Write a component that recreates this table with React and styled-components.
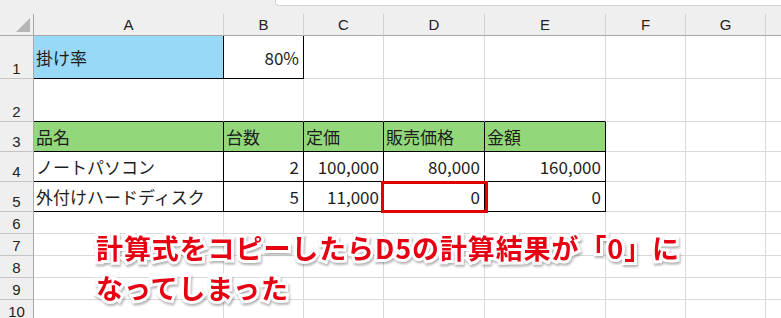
import React from "react";
import styled, { createGlobalStyle } from "styled-components";

const GlobalStyle = createGlobalStyle`
  html, body {
    margin: 0;
    padding: 0;
    background: #fff;
    overflow: hidden;
  }
`;

const COLS = ["A", "B", "C", "D", "E", "F", "G", ""];
const WIDTHS = [34, 190, 80, 80, 101, 121, 80, 80, 16];
const HEIGHTS = [43, 43, 30, 30, 30, 22, 22, 22, 22, 22];

const BLUE = "#97d9f6";
const GREEN = "#92d87a";

// sparse cell data, keyed by [row][col]
const DATA = {
  1: {
    0: { text: "掛け率", fill: BLUE, box: true },
    1: { text: "80%", right: true, box: true },
  },
  3: {
    0: { text: "品名", fill: GREEN, box: true },
    1: { text: "台数", fill: GREEN, box: true },
    2: { text: "定価", fill: GREEN, box: true },
    3: { text: "販売価格", fill: GREEN, box: true },
    4: { text: "金額", fill: GREEN, box: true },
  },
  4: {
    0: { text: "ノートパソコン", box: true },
    1: { text: "2", right: true, box: true },
    2: { text: "100,000", right: true, box: true },
    3: { text: "80,000", right: true, box: true },
    4: { text: "160,000", right: true, box: true },
  },
  5: {
    0: { text: "外付けハードディスク", box: true },
    1: { text: "5", right: true, box: true },
    2: { text: "11,000", right: true, box: true },
    3: { text: "0", right: true, box: true, flagged: true },
    4: { text: "0", right: true, box: true },
  },
};

const cellAt = (r, c) => (DATA[r] && DATA[r][c]) || null;
const boxed = (r, c) => !!cellAt(r, c)?.box;

const Sheet = styled.div`
  position: relative;
  width: 781px;
  height: 318px;
  overflow: hidden;
  background: #efefef;
  font-family: "Noto Sans CJK JP", "Noto Sans", sans-serif;
`;

const TopStrip = styled.div`
  height: 14px;
  display: flex;
  padding-left: 275px;
`;

const FormulaBox = styled.div`
  flex: 1;
  height: 5px;
  background: #fff;
  border: 1px solid #d2d2d2;
  border-top: none;
  border-right: none;
  border-bottom-left-radius: 4px;
`;

const Grid = styled.div`
  display: grid;
  grid-template-columns: ${WIDTHS.map((w) => w + "px").join(" ")};
  grid-template-rows: 22px ${HEIGHTS.map((h) => h + "px").join(" ")};
`;

const Corner = styled.div`
  background: #efefef;
  border-right: 1px solid #a8a8a8;
  border-bottom: 1px solid #a8a8a8;
  display: flex;
  align-items: flex-end;
  justify-content: flex-end;
  padding: 0 3px 3px 0;

  &::after {
    content: "";
    width: 0;
    height: 0;
    border-left: 14px solid transparent;
    border-bottom: 14px solid #b5b5b5;
  }
`;

const ColHead = styled.div`
  background: #efefef;
  border-right: 1px solid #d0d0d0;
  border-bottom: 1px solid #a8a8a8;
  display: flex;
  align-items: center;
  justify-content: center;
  font-family: "Liberation Sans", Arial, sans-serif;
  font-size: 15px;
  color: #222;
`;

const RowHead = styled.div`
  background: #efefef;
  border-right: 1px solid #a8a8a8;
  border-bottom: 1px solid #c4c4c4;
  display: flex;
  align-items: flex-end;
  justify-content: center;
  padding-bottom: 1px;
  font-family: "Liberation Sans", Arial, sans-serif;
  font-size: 15px;
  line-height: 17px;
  color: #222;
`;

const Cell = styled.div`
  position: relative;
  background: ${(p) => p.$fill || "#fff"};
  border-right: 1px solid ${(p) => (p.$edgeRight ? "#000" : "#d9d9d9")};
  border-bottom: 1px solid ${(p) => (p.$edgeBottom ? "#000" : "#d9d9d9")};
  display: flex;
  align-items: center;
  justify-content: ${(p) => (p.$right ? "flex-end" : "flex-start")};
  padding: 0 4px 0 2px;
  font-size: 17px;
  color: #1d1d1d;
  white-space: nowrap;
  min-width: 0;
`;

// thick red frame drawn over the cell that went wrong
const Highlight = styled.span`
  position: absolute;
  z-index: 2;
  left: -3px;
  top: -1px;
  width: 107px;
  height: 32px;
  box-sizing: border-box;
  border: 3px solid #e00000;
  pointer-events: none;
`;

const Callout = styled.div`
  position: absolute;
  z-index: 3;
  left: 96px;
  top: 228px;
  font-family: "Noto Sans CJK JP", sans-serif;
  font-weight: 700;
  font-size: 27px;
  line-height: 40px;
  color: #e60012;
  letter-spacing: 0.9px;
  -webkit-text-stroke: 6px #fff;
  paint-order: stroke fill;
  filter: drop-shadow(1px 2px 1px rgba(0, 0, 0, 0.3));
`;

export default function App() {
  return (
    <>
      <GlobalStyle />
      <Sheet>
        <TopStrip>
          <FormulaBox />
        </TopStrip>
        <Grid>
          <Corner />
          {COLS.map((c, i) => (
            <ColHead key={"h" + i}>{c}</ColHead>
          ))}
          {HEIGHTS.map((_, ri) => {
            const r = ri + 1;
            return (
              <React.Fragment key={r}>
                <RowHead>{r}</RowHead>
                {COLS.map((_, c) => {
                  const cell = cellAt(r, c);
                  return (
                    <Cell
                      key={c}
                      $fill={cell?.fill}
                      $right={cell?.right}
                      $edgeRight={boxed(r, c) || boxed(r, c + 1)}
                      $edgeBottom={boxed(r, c) || boxed(r + 1, c)}
                    >
                      {cell?.text}
                      {cell?.flagged && <Highlight />}
                    </Cell>
                  );
                })}
              </React.Fragment>
            );
          })}
        </Grid>
        <Callout>
          計算式をコピーしたらD5の計算結果が「0」に
          <br />
          なってしまった
        </Callout>
      </Sheet>
    </>
  );
}
